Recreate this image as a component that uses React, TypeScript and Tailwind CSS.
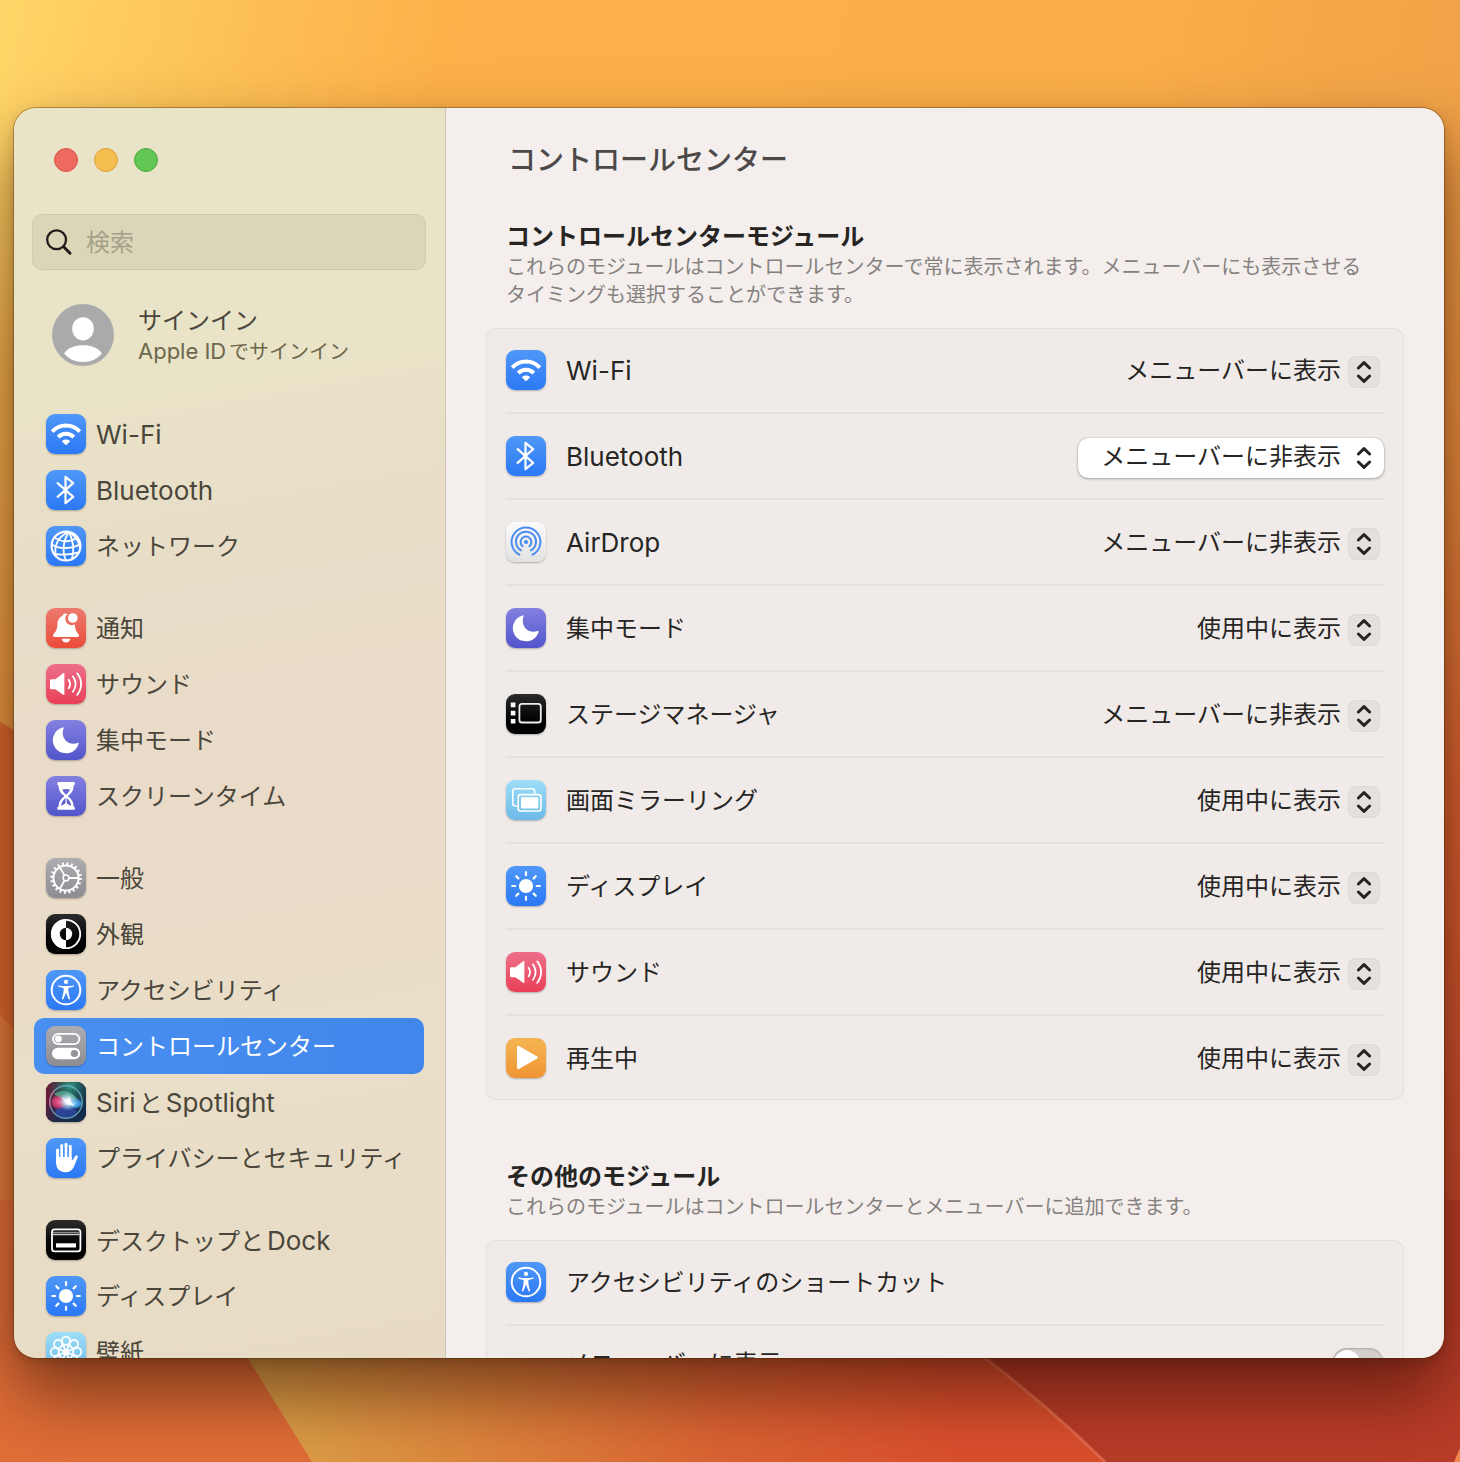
import { useState } from 'react';
import type { ReactNode } from 'react';

type IconName =
  | 'wifi'
  | 'bluetooth'
  | 'network'
  | 'notifications'
  | 'sound'
  | 'focus'
  | 'screentime'
  | 'general'
  | 'appearance'
  | 'accessibility'
  | 'controlcenter'
  | 'siri'
  | 'privacy'
  | 'dock'
  | 'display'
  | 'wallpaper'
  | 'airdrop'
  | 'stage'
  | 'mirroring'
  | 'nowplaying';

const BLUE = 'bg-linear-to-b from-[#4f97f7] to-[#2b78f5]';
const INDIGO = 'bg-linear-to-b from-[#8480e0] to-[#5254cb]';
const GRAY = 'bg-linear-to-b from-[#adadb1] to-[#8d8c91]';
const BLACK = 'bg-linear-to-b from-[#2c2c2c] to-black';
const SKY = 'bg-linear-to-b from-[#9ddff8] to-[#6cb8e8]';

const TILES: Record<IconName, string> = {
  wifi: BLUE,
  bluetooth: BLUE,
  network: BLUE,
  notifications: 'bg-linear-to-b from-[#ed7a6e] to-[#ea4a38]',
  sound: 'bg-linear-to-b from-[#ed6e8a] to-[#e93f57]',
  focus: INDIGO,
  screentime: INDIGO,
  general: GRAY,
  appearance: BLACK,
  accessibility: BLUE,
  controlcenter: GRAY,
  siri: 'bg-black',
  privacy: BLUE,
  dock: BLACK,
  display: BLUE,
  wallpaper: SKY,
  airdrop: 'bg-linear-to-b from-[#fbfbfb] to-[#e2e2e2]',
  stage: BLACK,
  mirroring: SKY,
  nowplaying: 'bg-linear-to-b from-[#f4b551] to-[#ef9433]',
};

const RAYS = [0, 45, 90, 135, 180, 225, 270, 315];

const GLYPHS: Record<IconName, ReactNode> = {
  wifi: (
    <>
      <path d="M6.2 17.6A18.6 18.6 0 0 1 33.8 17.6" fill="none" stroke="#fff" strokeWidth="4" />
      <path d="M12.2 23.2A10.8 10.8 0 0 1 27.8 23.2" fill="none" stroke="#fff" strokeWidth="4" />
      <path d="M15.8 27.2C18 24.9 22 24.9 24.2 27.2L20.7 30.8Q20 31.4 19.3 30.8Z" fill="#fff" />
    </>
  ),
  bluetooth: (
    <path
      d="M11.6 13.2L27.2 26.8L19.5 33.2V6.8L27.2 13.2L11.6 26.8"
      fill="none"
      stroke="#fff"
      strokeWidth="2.2"
      strokeLinejoin="round"
      strokeLinecap="round"
    />
  ),
  network: (
    <g fill="none" stroke="#fff" strokeWidth="1.8">
      <circle cx="20" cy="20" r="14.4" strokeWidth="2.2" />
      <path d="M22 6C12 11 7.5 20 10 30.5" />
      <path d="M23 6C17 14 16 26 20 34.4" />
      <path d="M23 6C27 14 28.5 24 26 33" />
      <path d="M22.5 6C30 10 34 17 34 23" />
      <path d="M8.6 11.4C15 16.5 24 16.5 31.5 11.5" />
      <path d="M5.8 18.5C13 23.5 27 23 34.2 18" />
      <path d="M8 28C15 28.8 25 29 32.6 26.4" />
    </g>
  ),
  notifications: (
    <g fill="#fff">
      <path d="M19.6 5.4C18 5.4 16.8 6.4 16.5 7.8C13 9.4 11.6 12.4 11.4 16.4C11.2 21 10.2 23.2 7.6 26C6.3 27.6 7 29 8.8 29H31.2C33 29 33.7 27.6 32.4 26C30 23.2 29 20.8 28.7 16.2A6.3 6.3 0 0 1 21.4 6Z" />
      <circle cx="26.8" cy="10" r="4.8" />
      <path d="M15.6 30.8H24.4C24 33.2 22.2 34.4 20 34.4S16 33.2 15.6 30.8Z" />
    </g>
  ),
  sound: (
    <>
      <path d="M5.4 15.2H9.4L16.8 9.4C17.8 8.7 18.4 9 18.4 10.2V29.8C18.4 31 17.8 31.3 16.8 30.6L9.4 25.2H5.4C4.4 25.2 4 24.8 4 23.8V16.6C4 15.6 4.4 15.2 5.4 15.2Z" fill="#fff" />
      <g fill="none" stroke="#fff" strokeWidth="1.8" strokeLinecap="round">
        <path d="M22.6 15.8C24.6 18.2 24.6 22 22.6 24.4" />
        <path d="M26.9 12.4C30.5 17 30.5 23.2 26.9 27.8" />
        <path d="M31.2 9.4C36.4 15.6 36.4 24.6 31.2 30.8" />
      </g>
    </>
  ),
  focus: (
    <path
      d="M16.6 7.4A13.2 13.2 0 1 0 32.7 23.8C32.9 23 32.3 22.6 31.6 22.9C22.8 26.4 13.7 18.2 17.7 8.1C18 7.3 17.4 6.9 16.6 7.4Z"
      fill="#fff"
    />
  ),
  screentime: (
    <>
      <path d="M12 6H28.2C29.6 7.4 29 9 27.6 9.4C27.6 14.4 25.6 17 22.2 19.6V20.6C25.6 23 27.6 26 27.6 30.4C29 31 29.6 32.6 28.2 33.8H12C10.6 32.6 11.2 31 12.6 30.4C12.6 26 14.6 23 18 20.6V19.6C14.6 17 12.6 14.4 12.6 9.4C11.2 9 10.6 7.4 12 6Z" fill="#fff" />
      <path d="M16 13.8L19.6 18.4H20.6L24.2 13.8C21.4 12.8 18.8 12.8 16 13.8Z" fill="#6867d5" />
      <path d="M19.7 21.8C17 24 15.2 26.8 15 30L19.9 27L25.2 30C25 26.8 23.2 24 20.5 21.8Z" fill="#6061d1" />
      <path d="M20.1 20V28" stroke="#fff" strokeWidth="1.2" />
    </>
  ),
  general: (
    <g fill="none" stroke="#fff">
      <circle cx="20" cy="20" r="12.6" strokeWidth="2" />
      <circle cx="20" cy="20" r="14.4" strokeWidth="2.8" strokeDasharray="1.9 2.624" />
      <circle cx="20" cy="20" r="2.9" strokeWidth="1.5" />
      <path d="M23 20H32.4M18.5 17.4L13.6 8.9M18.5 22.6L13.6 31.1" strokeWidth="1.8" />
    </g>
  ),
  appearance: (
    <>
      <circle cx="20" cy="20" r="14.2" fill="none" stroke="#fff" strokeWidth="1.8" />
      <path d="M20 5.2A14.8 14.8 0 0 0 20 34.8V26.2A6.2 6.2 0 0 1 20 13.8Z" fill="#fff" />
      <path d="M20 13.8A6.2 6.2 0 0 1 20 26.2Z" fill="#fff" />
    </>
  ),
  accessibility: (
    <>
      <circle cx="20" cy="20" r="14.3" fill="none" stroke="#fff" strokeWidth="2" />
      <circle cx="20" cy="11.9" r="2.1" fill="#fff" />
      <path
        d="M12.6 15.4C12 15.3 11.8 16.6 12.6 16.8L17.6 18C17.9 21.4 17 25.4 15.9 28.4C15.7 29.4 17 29.8 17.4 29L20 22.8L22.6 29C23 29.8 24.3 29.4 24.1 28.4C23 25.4 22.1 21.4 22.4 18L27.4 16.8C28.2 16.6 28 15.3 27.4 15.4C22.6 16.1 17.4 16.1 12.6 15.4Z"
        fill="#fff"
      />
    </>
  ),
  controlcenter: (
    <>
      <rect x="7" y="7.8" width="26.4" height="10.4" rx="5.2" fill="none" stroke="#fff" strokeWidth="1.8" />
      <circle cx="12.4" cy="13" r="3.4" fill="#fff" />
      <rect x="6" y="21.8" width="28.2" height="11.4" rx="5.7" fill="#fff" />
      <circle cx="28.4" cy="27.5" r="3.6" fill="#949398" />
    </>
  ),
  siri: (
    <>
      <defs>
        <linearGradient id="siri-bg" x1="0" y1="0.2" x2="1" y2="0.8">
          <stop offset="0" stopColor="#7a1734" />
          <stop offset="0.5" stopColor="#232a4c" />
          <stop offset="1" stopColor="#0f2c4a" />
        </linearGradient>
        <radialGradient id="siri-teal" cx="0.6" cy="0.1" r="0.65">
          <stop offset="0" stopColor="#2f9a80" />
          <stop offset="1" stopColor="#14423f" stopOpacity="0" />
        </radialGradient>
        <radialGradient id="siri-pink">
          <stop offset="0" stopColor="#fa5c92" />
          <stop offset="0.7" stopColor="#d83a70" stopOpacity="0.8" />
          <stop offset="1" stopColor="#c02455" stopOpacity="0.1" />
        </radialGradient>
        <radialGradient id="siri-blue">
          <stop offset="0" stopColor="#6fcaff" />
          <stop offset="0.7" stopColor="#3f9ae6" stopOpacity="0.8" />
          <stop offset="1" stopColor="#2374c9" stopOpacity="0.1" />
        </radialGradient>
        <radialGradient id="siri-core">
          <stop offset="0" stopColor="#fff" />
          <stop offset="0.35" stopColor="#e6f4ff" stopOpacity="0.85" />
          <stop offset="1" stopColor="#9fd8ff" stopOpacity="0" />
        </radialGradient>
      </defs>
      <rect width="40" height="40" rx="9" fill="url(#siri-bg)" />
      <rect width="40" height="40" rx="9" fill="url(#siri-teal)" />
      <ellipse cx="20" cy="30" rx="11" ry="6" fill="#3554c4" opacity="0.6" />
      <ellipse cx="12.5" cy="20" rx="8" ry="7.6" fill="url(#siri-pink)" />
      <ellipse cx="29" cy="21.5" rx="8" ry="5.5" fill="url(#siri-blue)" />
      <path d="M8 12C16 6 27 9 32 18C25 17 15 18 8 12Z" fill="#6fe0b8" opacity="0.5" />
      <circle cx="20" cy="20" r="16.2" fill="none" stroke="#6fb5c8" strokeWidth="1.4" opacity="0.8" />
      <path d="M4.5 25A16.4 16.4 0 0 1 8 8.8" fill="none" stroke="#e0568a" strokeWidth="1.2" opacity="0.8" />
      <circle cx="21.5" cy="19.5" r="9.5" fill="url(#siri-core)" />
      <path d="M15 15L20 18L24 15L24 19L29 24L21.5 22.5Z" fill="#fff" opacity="0.9" />
    </>
  ),
  privacy: (
    <>
      <g stroke="#fff" strokeWidth="3" strokeLinecap="round">
        <path d="M11.6 12V25M15.7 7.6V22M20 6.2V22M24.2 8.2V22" />
      </g>
      <path
        d="M10.2 20.5V25C10.2 31 14 34.2 19.4 34.2C23.6 34.2 26.4 32.2 28 28.4L31.8 19C32.4 17.4 30.4 16.4 29.4 17.8L26.8 21.8C26.3 22.6 25.6 22.4 25.6 21.4V19H10.2Z"
        fill="#fff"
      />
      <path d="M13.65 11V19M17.85 9V19M22.1 9V19" stroke="#3d89f6" strokeWidth="1" />
    </>
  ),
  dock: (
    <g fill="none" stroke="#fff">
      <rect x="6" y="9.4" width="28.4" height="22" rx="2.6" strokeWidth="1.8" />
      <path d="M7 12.6H33.4" strokeWidth="1.6" stroke="#8f8f8f" />
      <path d="M7 14.6H33.4" strokeWidth="1.2" stroke="#d2d2d2" />
      <path d="M10 25.4H30" strokeWidth="4.2" />
    </g>
  ),
  display: (
    <>
      <circle cx="20" cy="20" r="7.1" fill="#fff" />
      {RAYS.map((angle) => (
        <path
          key={angle}
          d="M20 6.2V9.2"
          stroke="#fff"
          strokeWidth="2.2"
          strokeLinecap="round"
          transform={`rotate(${angle} 20 20)`}
        />
      ))}
    </>
  ),
  wallpaper: (
    <g fill="none" stroke="#fff" strokeWidth="1.8">
      {RAYS.map((angle) => (
        <g key={angle} transform={`rotate(${angle} 20 20)`}>
          <circle cx="20" cy="8.8" r="4.1" />
          <path d="M17 11.8L20 20L23 11.8" strokeWidth="1.2" />
        </g>
      ))}
      <circle cx="20" cy="20" r="2.6" />
    </g>
  ),
  airdrop: (
    <g fill="none" stroke="#4a8df2" strokeWidth="2" strokeLinecap="round">
      <circle cx="20" cy="20" r="2.1" fill="#4a8df2" stroke="none" />
      <path d="M16.6 24.2A5.4 5.4 0 1 1 23.4 24.2" />
      <path d="M15 28.3A10 10 0 1 1 25 28.3" />
      <path d="M13.4 32.7A14.4 14.4 0 1 1 26.6 32.7" />
    </g>
  ),
  stage: (
    <>
      <rect x="13.4" y="9.9" width="21.4" height="18.6" rx="2.6" fill="none" stroke="#eee" strokeWidth="1.8" />
      <path d="M4.8 8.4H9.4V13.2H4.8ZM4.8 16.8H9.4V21.4H4.8ZM4.8 25H9.4V29.6H4.8Z" fill="#fff" />
    </>
  ),
  mirroring: (
    <>
      <path d="M11.4 26H9Q6.8 26 6.8 23.8V11Q6.8 8.8 9 8.8H26.4Q28.6 8.8 28.6 11V13.6" fill="none" stroke="#fff" strokeWidth="1.6" />
      <rect x="12.2" y="14.6" width="22.8" height="16.4" rx="2.4" fill="none" stroke="#fff" strokeWidth="1.6" />
      <rect x="15" y="17.2" width="17.4" height="11.4" rx="0.8" fill="#fff" />
    </>
  ),
  nowplaying: (
    <path d="M11 9C11 8 12 7.6 12.9 8.1L31.2 18.4C32.2 19 32.2 20 31.2 20.6L12.9 30.9C12 31.4 11 31 11 30Z" fill="#fff" />
  ),
};

function AppIcon({ name }: { name: IconName }) {
  return (
    <span className={`block size-10 shrink-0 rounded-[9px] shadow-[0_1px_2px_rgba(0,0,0,0.28)] ${TILES[name]}`}>
      <svg viewBox="0 0 40 40" className="size-10" aria-hidden="true">
        {GLYPHS[name]}
      </svg>
    </span>
  );
}

// Latin words are set one step larger than the kana around them.
function Bilingual({ text, small }: { text: string; small?: boolean }) {
  return (
    <>
      {text
        .split(/([A-Za-z][A-Za-z -]*)/)
        .filter(Boolean)
        .map((run) =>
          /^[A-Za-z]/.test(run) ? (
            <span key={run} className={small ? 'text-[22px]' : 'text-[26px]'}>
              {run}
            </span>
          ) : (
            run
          )
        )}
    </>
  );
}

const SIDEBAR: { icon: IconName; label: string }[][] = [
  [
    { icon: 'wifi', label: 'Wi-Fi' },
    { icon: 'bluetooth', label: 'Bluetooth' },
    { icon: 'network', label: 'ネットワーク' },
  ],
  [
    { icon: 'notifications', label: '通知' },
    { icon: 'sound', label: 'サウンド' },
    { icon: 'focus', label: '集中モード' },
    { icon: 'screentime', label: 'スクリーンタイム' },
  ],
  [
    { icon: 'general', label: '一般' },
    { icon: 'appearance', label: '外観' },
    { icon: 'accessibility', label: 'アクセシビリティ' },
    { icon: 'controlcenter', label: 'コントロールセンター' },
    { icon: 'siri', label: 'SiriとSpotlight' },
    { icon: 'privacy', label: 'プライバシーとセキュリティ' },
  ],
  [
    { icon: 'dock', label: 'デスクトップとDock' },
    { icon: 'display', label: 'ディスプレイ' },
    { icon: 'wallpaper', label: '壁紙' },
  ],
];

const SHOW = 'メニューバーに表示';
const HIDE = 'メニューバーに非表示';
const ACTIVE = '使用中に表示';

const MODULES: { icon: IconName; label: string; value: string; hovered?: boolean }[] = [
  { icon: 'wifi', label: 'Wi-Fi', value: SHOW },
  { icon: 'bluetooth', label: 'Bluetooth', value: HIDE, hovered: true },
  { icon: 'airdrop', label: 'AirDrop', value: HIDE },
  { icon: 'focus', label: '集中モード', value: ACTIVE },
  { icon: 'stage', label: 'ステージマネージャ', value: HIDE },
  { icon: 'mirroring', label: '画面ミラーリング', value: ACTIVE },
  { icon: 'display', label: 'ディスプレイ', value: ACTIVE },
  { icon: 'sound', label: 'サウンド', value: ACTIVE },
  { icon: 'nowplaying', label: '再生中', value: ACTIVE },
];

function Wallpaper() {
  return (
    <svg
      viewBox="0 0 1460 1462"
      preserveAspectRatio="none"
      className="absolute inset-0 -z-10 h-full w-full"
      aria-hidden="true"
    >
      <defs>
        <linearGradient id="wp-sky" x1="0" y1="0" x2="1460" y2="300" gradientUnits="userSpaceOnUse">
          <stop offset="0" stopColor="#ffd669" />
          <stop offset="0.17" stopColor="#fdbf55" />
          <stop offset="0.3" stopColor="#fdb04a" />
          <stop offset="0.75" stopColor="#fbae49" />
          <stop offset="1" stopColor="#f0a147" />
        </linearGradient>
        <linearGradient id="wp-left" x1="0" y1="100" x2="0" y2="720" gradientUnits="userSpaceOnUse">
          <stop offset="0" stopColor="#ffd060" stopOpacity="0" />
          <stop offset="0.4" stopColor="#eeb04c" />
          <stop offset="1" stopColor="#e8963f" />
        </linearGradient>
        <linearGradient id="wp-right" x1="0" y1="0" x2="0" y2="1">
          <stop offset="0" stopColor="#f0a147" />
          <stop offset="0.25" stopColor="#e68c3c" />
          <stop offset="0.5" stopColor="#d5602f" />
          <stop offset="1" stopColor="#b53726" />
        </linearGradient>
        <linearGradient id="wp-gold" x1="250" y1="0" x2="960" y2="0" gradientUnits="userSpaceOnUse">
          <stop offset="0" stopColor="#dca348" />
          <stop offset="0.3" stopColor="#de873d" />
          <stop offset="0.65" stopColor="#db6433" />
          <stop offset="1" stopColor="#db4f2d" />
        </linearGradient>
      </defs>
      <rect width="1460" height="1462" fill="url(#wp-sky)" />
      <path d="M0 100H120V800H0Z" fill="url(#wp-left)" />
      <path d="M1400 108H1460V1462H1400Z" fill="url(#wp-right)" />
      <path d="M0 722L120 790V1462H0Z" fill="#d9692f" />
      <path d="M0 1014L120 1160V1462H0Z" fill="#e27a3a" />
      <path d="M0 1200H400V1462H0Z" fill="#e06e37" />
      <path d="M150 1200L312 1462H1200V1200Z" fill="url(#wp-gold)" />
      <path d="M800 1200L985 1358Q1050 1408 1105 1462H1460V1200Z" fill="#b93c28" />
      <path d="M985 1358Q1050 1408 1105 1462" fill="none" stroke="#e87552" strokeWidth="3" opacity="0.7" />
      <path d="M1460 1448L1454 1462H1460Z" fill="#f08a50" />
    </svg>
  );
}

function Stepper({ hovered }: { hovered?: boolean }) {
  return (
    <span
      className={`pointer-events-none absolute top-1 right-1 block size-8 rounded-lg ${
        hovered ? '' : 'bg-[#e5e0dd] shadow-[inset_0_0_0_1px_rgba(0,0,0,0.03)]'
      }`}
    >
      <svg viewBox="0 0 32 32" className="size-8" aria-hidden="true">
        <path
          d="M10.4 12L16 6.6L21.6 12M10.4 20L16 25.4L21.6 20"
          fill="none"
          stroke="#262423"
          strokeWidth="3"
          strokeLinecap="round"
          strokeLinejoin="round"
        />
      </svg>
    </span>
  );
}

function ModuleRow({ icon, label, value, hovered }: (typeof MODULES)[number]) {
  const [selected, setSelected] = useState(value);
  const id = `module-${icon}`;

  return (
    <li className="flex h-[86px] items-center gap-5 border-b-2 border-[#e5e0dd] last:h-[84px] last:border-b-0">
      <AppIcon name={icon} />
      <label htmlFor={id} className="flex-1 pt-[2px]">
        <Bilingual text={label} />
      </label>
      <div className="relative mt-1">
        <select
          id={id}
          value={selected}
          onChange={(e) => setSelected(e.target.value)}
          className={`h-10 w-[306px] appearance-none rounded-[10px] pr-[43px] pb-[2px] [text-align-last:right] outline-none ${
            hovered ? 'bg-white shadow-[0_0_1px_rgba(0,0,0,0.3),0_1px_3px_rgba(0,0,0,0.3)]' : 'bg-transparent'
          }`}
        >
          <option>{SHOW}</option>
          <option>{HIDE}</option>
          <option>{ACTIVE}</option>
        </select>
        <Stepper hovered={hovered} />
      </div>
    </li>
  );
}

function Section({ title, description, children }: { title: string; description: string; children: ReactNode }) {
  return (
    <section>
      <div className="mb-[19px] pr-6 pl-5">
        <h2 className="leading-8 font-bold">{title}</h2>
        <p className="text-[20px] leading-7 text-[#85817f]">{description}</p>
      </div>
      <ul className="rounded-[10px] bg-[#f0ebe8] px-5 shadow-[inset_0_0_0_1px_#e4dfdc]">{children}</ul>
    </section>
  );
}

function Sidebar() {
  return (
    <aside className="w-[432px] shrink-0 overflow-hidden border-r border-[#cfc4b3] bg-linear-[170deg,#e9e4c7_0%,#e9e3c7_22%,#e8dec8_34%,#e9dbc8_55%,#e9dec8_75%,#e7dbc5_100%] pt-10 pr-[19px] pl-[18px]">
      <div className="flex gap-4 pl-[22px]">
        <button aria-label="閉じる" className="size-6 rounded-full border border-[#dd5448] bg-[#ee6a5f]" />
        <button aria-label="しまう" className="size-6 rounded-full border border-[#dca23c] bg-[#f5bf4f]" />
        <button aria-label="拡大" className="size-6 rounded-full border border-[#51aa3f] bg-[#62c655]" />
      </div>

      <label className="mt-[42px] flex h-14 items-center gap-[13px] rounded-[10px] border border-[#d0c9ad] bg-[#dcd6b9] pl-3">
        <svg viewBox="0 0 28 28" className="size-7 shrink-0" aria-hidden="true">
          <circle cx="11.6" cy="11.8" r="9.4" fill="none" stroke="#1f1e1a" strokeWidth="2.3" />
          <path d="M18.6 18.8L25 25.2" stroke="#1f1e1a" strokeWidth="3" strokeLinecap="round" />
        </svg>
        <input
          type="text"
          placeholder="検索"
          aria-label="検索"
          className="min-w-0 flex-1 bg-transparent pt-[2px] outline-none placeholder:text-[#a5a088]"
        />
      </label>

      <a href="#signin" className="mt-[34px] flex items-center gap-6 pl-5">
        <svg viewBox="0 0 62 62" className="size-[62px] shrink-0" aria-hidden="true">
          <circle cx="31" cy="31" r="31" fill="#aaa" />
          <ellipse cx="31" cy="24.8" rx="10.8" ry="11.6" fill="#fff" />
          <path d="M12 49.6C16 43.6 23 41.2 31 41.2S46 43.6 50 49.6C45 55.4 38.6 58 31 58S17 55.4 12 49.6Z" fill="#fff" />
        </svg>
        <span>
          <span className="block leading-8">サインイン</span>
          <span className="block text-[20px] leading-7 text-[#6d674c]">
            <Bilingual text="Apple IDでサインイン" small />
          </span>
        </span>
      </a>

      <nav className="mt-10 flex flex-col gap-[26px] px-[2px]">
        {SIDEBAR.map((group) => (
          <ul key={group[0].icon}>
            {group.map((item) => {
              const current = item.icon === 'controlcenter';
              return (
                <li key={item.icon}>
                  <a
                    href={`#${item.icon}`}
                    aria-current={current ? 'page' : undefined}
                    className={`flex h-14 items-center gap-[10px] rounded-[10px] pl-3 whitespace-nowrap ${
                      current ? 'bg-linear-to-r from-[#498ff2] to-[#4186ea] text-white' : ''
                    }`}
                  >
                    <AppIcon name={item.icon} />
                    <span className="pt-[2px]">
                      <Bilingual text={item.label} />
                    </span>
                  </a>
                </li>
              );
            })}
          </ul>
        ))}
      </nav>
    </aside>
  );
}

export default function App() {
  const [shortcut, setShortcut] = useState(false);

  return (
    <div className="relative isolate flex h-screen overflow-hidden pt-[108px] pr-4 pb-[104px] pl-[14px] font-['Inter','Noto_Sans_CJK_JP',sans-serif] text-[24px] leading-8 [text-autospace:normal]">
      <Wallpaper />
      <div className="flex min-w-0 flex-1 rounded-[22px] shadow-[0_0_0_1px_rgba(70,40,0,0.35),0_4px_12px_rgba(0,0,0,0.15),0_36px_70px_rgba(40,10,0,0.55)]">
        <div className="flex min-w-0 flex-1 overflow-hidden rounded-[22px] text-[#4a463b]">
          <Sidebar />

          <main className="min-w-0 flex-1 overflow-hidden bg-[#f4efec] px-10 text-[#262524]">
            <header className="flex h-[104px] items-center px-[22px]">
              <h1 className="text-[28px] leading-9 font-medium text-[#4c4948]">コントロールセンター</h1>
            </header>

            <div className="flex flex-col gap-[61px] pt-[9px]">
              <Section
                title="コントロールセンターモジュール"
                description="これらのモジュールはコントロールセンターで常に表示されます。メニューバーにも表示させるタイミングも選択することができます。"
              >
                {MODULES.map((module) => (
                  <ModuleRow key={module.icon} {...module} />
                ))}
              </Section>

              <Section
                title="その他のモジュール"
                description="これらのモジュールはコントロールセンターとメニューバーに追加できます。"
              >
                <li className="flex h-[86px] items-center gap-5 border-b-2 border-[#e5e0dd]">
                  <AppIcon name="accessibility" />
                  <span className="pt-[2px]">アクセシビリティのショートカット</span>
                </li>
                <li className="flex h-[74px] items-center justify-between pl-[60px]">
                  <label htmlFor="shortcut-menubar" className="pt-[2px]">
                    {SHOW}
                  </label>
                  <input
                    id="shortcut-menubar"
                    type="checkbox"
                    role="switch"
                    checked={shortcut}
                    onChange={(e) => setShortcut(e.target.checked)}
                    className="h-[30px] w-[52px] appearance-none rounded-full bg-[#d3cfcc] p-[2px] shadow-[inset_0_1px_2px_rgba(0,0,0,0.2)] before:block before:size-[26px] before:rounded-full before:bg-white before:shadow-sm checked:bg-[#3b82f6] checked:before:ml-[22px]"
                  />
                </li>
              </Section>
            </div>
          </main>
        </div>
      </div>
    </div>
  );
}
